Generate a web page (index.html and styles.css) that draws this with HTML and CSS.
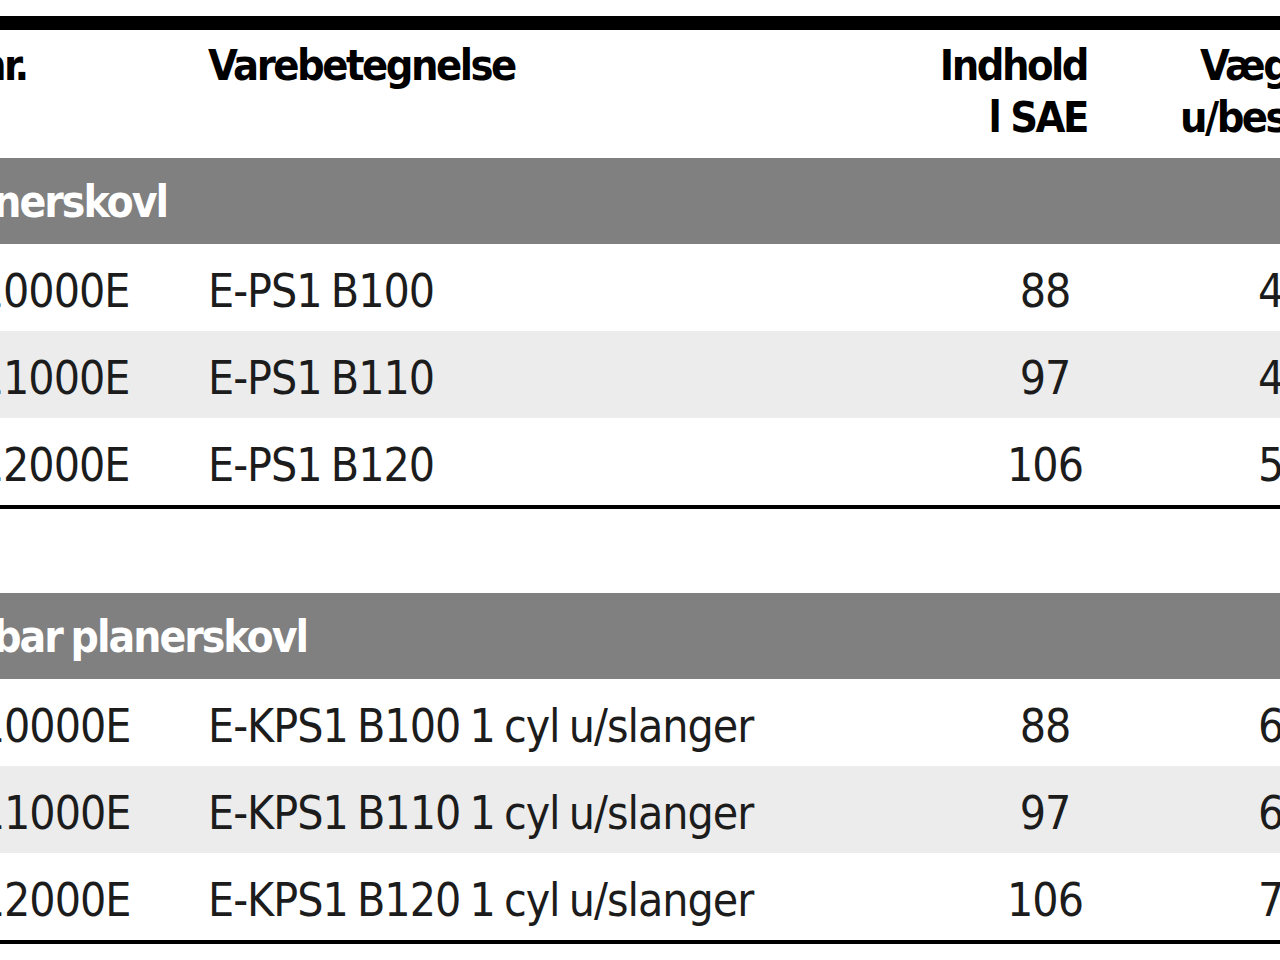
FILE: index.html
```html
<!DOCTYPE html>
<html lang="da">
<head>
<meta charset="utf-8">
<title>Planerskovle</title>
<link rel="stylesheet" href="styles.css">
</head>
<body>
<div class="clip">
  <div class="sheet">
    <table class="price">
      <colgroup>
        <col class="c-nr"><col class="c-name"><col class="c-vol"><col class="c-wt">
      </colgroup>
      <thead>
        <tr>
          <th class="nr">Varenr.</th>
          <th class="name">Varebetegnelse</th>
          <th class="vol">Indhold<br>l SAE</th>
          <th class="wt">Vægt<br>u/beslag</th>
        </tr>
      </thead>
      <tbody>
        <tr class="group"><td colspan="4">Planerskovl</td></tr>
        <tr>
          <td class="nr">EPS110000E</td><td class="name">E-PS1 B100</td><td class="vol">88</td><td class="wt">425</td>
        </tr>
        <tr class="alt">
          <td class="nr">EPS111000E</td><td class="name">E-PS1 B110</td><td class="vol">97</td><td class="wt">460</td>
        </tr>
        <tr>
          <td class="nr">EPS112000E</td><td class="name">E-PS1 B120</td><td class="vol">106</td><td class="wt">505</td>
        </tr>
      </tbody>
    </table>

    <table class="price price--cont">
      <colgroup>
        <col class="c-nr"><col class="c-name"><col class="c-vol"><col class="c-wt">
      </colgroup>
      <tbody>
        <tr class="group group--klap"><td colspan="4">Klapbar planerskovl</td></tr>
        <tr>
          <td class="nr">KPS110000E</td><td class="name">E-KPS1 B100 1 cyl u/slanger</td><td class="vol">88</td><td class="wt">640</td>
        </tr>
        <tr class="alt">
          <td class="nr">KPS111000E</td><td class="name">E-KPS1 B110 1 cyl u/slanger</td><td class="vol">97</td><td class="wt">680</td>
        </tr>
        <tr>
          <td class="nr">KPS112000E</td><td class="name">E-KPS1 B120 1 cyl u/slanger</td><td class="vol">106</td><td class="wt">720</td>
        </tr>
      </tbody>
    </table>
  </div>
</div>
</body>
</html>
```

FILE: styles.css
```css
html, body {
  margin: 0;
  padding: 0;
  background: #ffffff;
}

.clip {
  width: 1280px;
  height: 960px;
  overflow: hidden;
  padding-top: 16px;
  box-sizing: border-box;
}

.sheet {
  width: 1560px;
  margin-left: -160px;
}

.price {
  width: 1560px;
  table-layout: fixed;
  border-collapse: separate;
  border-spacing: 0;
  border-top: 14px solid #000;
  border-bottom: 4px solid #000;
  font-family: "DejaVu Sans Condensed", "DejaVu Sans", sans-serif;
  font-stretch: condensed;
  font-size: 46px;
  line-height: 52px;
  letter-spacing: -1px;
  color: #1c1c1c;
}

.price--cont {
  border-top: 0;
  margin-top: 84px;
}

.c-nr { width: 368px; }
.c-name { width: 722px; }
.c-vol { width: 157px; }
.c-wt { width: 313px; }

.price th,
.price td {
  padding: 0;
  text-align: left;
  vertical-align: top;
  white-space: nowrap;
}

.price th {
  padding-top: 9px;
  padding-bottom: 15px;
  font-size: 43px;
  letter-spacing: -2.5px;
  font-weight: bold;
  color: #000;
}

.price td {
  padding-top: 21px;
  padding-bottom: 14px;
  word-spacing: -3px;
}

.price th.nr { padding-left: 50px; }
.price td.nr { padding-left: 38px; }

.price th.vol { text-align: right; padding-right: 0; }
.price td.vol { text-align: center; padding-left: 73px; }

.price th.wt { padding-left: 93px; text-indent: 20px; }
.price td.wt { padding-left: 171px; }

.price tr.alt { background: #ececec; }

.price tr.group td {
  background: #808080;
  color: #ffffff;
  font-weight: bold;
  font-size: 44px;
  letter-spacing: -2px;
  word-spacing: -3px;
  padding-top: 18px;
  padding-bottom: 16px;
  padding-left: 90px;
}

.price tr.group--klap td {
  padding-left: 62px;
}
```
